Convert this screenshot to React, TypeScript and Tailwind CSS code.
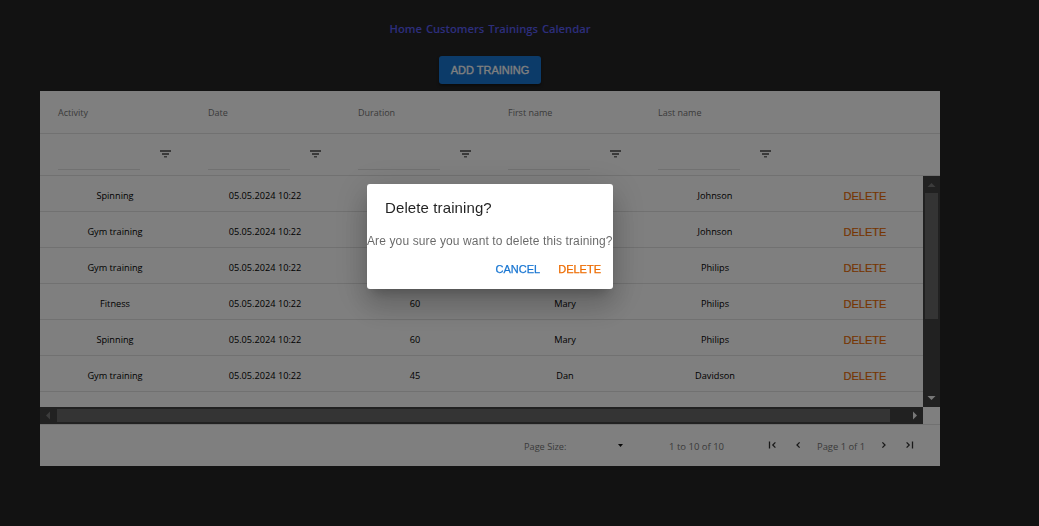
import React from "react";

const columns = [
  { title: "Activity" },
  { title: "Date" },
  { title: "Duration" },
  { title: "First name" },
  { title: "Last name" },
];

const rows = [
  ["Spinning", "05.05.2024 10:22", "", "", "Johnson"],
  ["Gym training", "05.05.2024 10:22", "", "", "Johnson"],
  ["Gym training", "05.05.2024 10:22", "", "", "Philips"],
  ["Fitness", "05.05.2024 10:22", "60", "Mary", "Philips"],
  ["Spinning", "05.05.2024 10:22", "60", "Mary", "Philips"],
  ["Gym training", "05.05.2024 10:22", "45", "Dan", "Davidson"],
];

function FilterIcon() {
  return (
    <svg width="11" height="8" viewBox="0 0 11 8" fill="#757575" className="block">
      <path d="M0 0h11v2H0zM2 3h7v2H2zM4 6h3v1.500H4z" />
    </svg>
  );
}

function Chevron({ left = false, bar = false }: { left?: boolean; bar?: boolean }) {
  return (
    <svg
      width="8"
      height="8"
      viewBox="0 0 8 8"
      fill="none"
      stroke="#333"
      strokeWidth="1.3"
      className={left ? "block -scale-x-100" : "block"}
    >
      <path d={bar ? "M0.6 1.4 3.2 4 0.6 6.600" : "M2.400 1.400 5 4 2.400 6.600"} />
      {bar && <path d="M6.500 0.500v7" />}
    </svg>
  );
}

function Header() {
  return (
    <>
      <div className="flex h-[43px] w-full shrink-0 border-b border-[#e2e2e2]">
        {columns.map((c) => (
          <div key={c.title} className="flex h-[43px] w-[150px] shrink-0 items-center pl-[18px] text-[9px] text-[#757575]">
            {c.title}
          </div>
        ))}
      </div>
      <div className="flex h-[42px] w-full shrink-0 border-b border-[#e2e2e2]">
        {columns.map((c) => (
          <div key={c.title} className="flex w-[150px] shrink-0 pl-[18px]">
            <div className="mb-[5px] w-[82px] border-b border-[#e2e2e2]" />
            <div className="ml-5 pt-[16px]">
              <FilterIcon />
            </div>
          </div>
        ))}
      </div>
    </>
  );
}

function Body() {
  return (
    <div className="flex h-[231px] shrink-0">
      <div className="w-[883px] overflow-hidden">
        {rows.map((r, i) => (
          <div key={i} className="flex h-9 border-b border-[#e2e2e2] text-[9.2px] text-black">
            {r.map((cell, j) => (
              <div key={j} className="flex h-10 w-[150px] shrink-0 items-center justify-center whitespace-nowrap">
                {cell}
              </div>
            ))}
            <button className="flex h-10 w-[150px] shrink-0 items-center justify-center font-[Liberation_Sans,sans-serif] text-[11px] text-[#ed6c02] [-webkit-text-stroke:0.2px]">
              DELETE
            </button>
          </div>
        ))}
      </div>
      <div className="flex w-[17px] flex-col items-center bg-[#424242]">
        <svg width="17" height="17" viewBox="0 0 17 17" fill="#787878"><path d="M4.500 11h8L8.500 7z" /></svg>
        <div className="h-[126px] w-[13px] bg-[#686868]" />
        <svg width="17" height="17" viewBox="0 0 17 17" fill="#f1f1f1" className="mt-auto"><path d="M4.500 6h8L8.500 10z" /></svg>
      </div>
    </div>
  );
}

function Footer() {
  return (
    <div className="flex h-[42px] shrink-0 border-t border-[#e2e2e2] text-[9.200px] text-[#757575]">
      <div className="flex h-[44px] w-full items-center">
        <span className="ml-[484px] w-[94px] text-[9.2px]">Page Size:</span>
        <svg width="5" height="3" viewBox="0 0 5 3" fill="#111" className="-mt-1"><path d="M0 0h5L2.500 3z" /></svg>
        <span className="ml-[46px] w-[99px] text-[9.5px] whitespace-nowrap">1 to 10 of 10</span>
        <div className="-mt-1 w-[26px]"><Chevron left bar /></div>
        <div className="-mt-1 w-[23px]"><Chevron left /></div>
        <span className="w-[63px] text-[9.4px] whitespace-nowrap">Page 1 of 1</span>
        <div className="-mt-1 w-[26px]"><Chevron /></div>
        <div className="-mt-1"><Chevron bar /></div>
      </div>
    </div>
  );
}

function DeleteDialog() {
  return (
    <div className="fixed inset-0 flex items-start bg-black/50 pt-[184px] pl-[367px] font-[Liberation_Sans,sans-serif]">
      <div
        role="dialog"
        className="flex h-[105px] w-[246px] flex-col rounded-[3px] bg-white shadow-[0_8px_11px_-5px_rgba(0,0,0,0.2),0_18px_28px_2px_rgba(0,0,0,0.14),0_7px_34px_6px_rgba(0,0,0,0.12)]"
      >
        <h2 className="h-[48px] pt-3 pl-[18px] text-[15px] leading-6 tracking-[0.11px] text-black/87">
          Delete training?
        </h2>
        <p className="h-[26px] text-[12px] leading-[18px] tracking-[0.12px] whitespace-nowrap text-black/60">
          Are you sure you want to delete this training?
        </p>
        <div className="flex justify-end gap-[18px] pr-3 text-[11px] leading-[22px] [-webkit-text-stroke:0.25px]">
          <button className="text-[#1976d2]">CANCEL</button>
          <button className="text-[#ed6c02]">DELETE</button>
        </div>
      </div>
    </div>
  );
}

export default function App() {
  return (
    <div className="h-[526px] w-full overflow-hidden bg-[#242424] font-[Open_Sans,sans-serif]">
      <nav className="flex h-14 justify-center gap-1 pt-5 pr-[59px] text-[11.2px] leading-[18px] font-semibold text-[#5a5cf5]">
        <a>Home</a>
        <a>Customers</a>
        <a>Trainings</a>
        <a>Calendar</a>
      </nav>
      <div className="h-[35px] pl-[439px]">
        <button className="flex h-7 w-[102px] items-center justify-center rounded-[3px] bg-[#1976d2] font-[Liberation_Sans,sans-serif] text-[11px] text-white shadow-[0_2px_3px_rgba(0,0,0,0.4)] [-webkit-text-stroke:0.3px]">
          ADD TRAINING
        </button>
      </div>
      <main className="ml-10 flex h-[375px] w-[900px] flex-col bg-white">
        <Header />
        <Body />
        <div className="flex h-[17px] w-[883px] shrink-0 items-center bg-[#424242]">
          <svg width="17" height="17" viewBox="0 0 17 17" fill="#787878"><path d="M10 4.500v8L6 8.500z" /></svg>
          <div className="h-[13px] w-[833px] bg-[#686868]" />
          <svg width="17" height="17" viewBox="0 0 17 17" fill="#f1f1f1" className="ml-auto"><path d="M7 4.500v8L11 8.500z" /></svg>
        </div>
        <Footer />
      </main>
      <DeleteDialog />
    </div>
  );
}
